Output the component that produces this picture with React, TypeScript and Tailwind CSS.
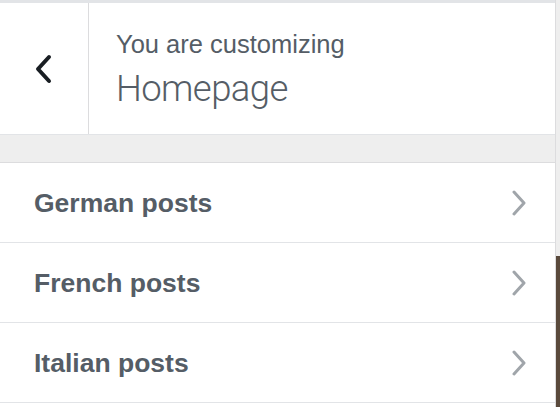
const items = ["German posts", "French posts", "Italian posts"];

const ChevronRight = () => (
  <svg width="16" height="26" viewBox="0 0 16 26" fill="none">
    <polyline
      points="3,2 13,13 3,24"
      stroke="#a0a5aa"
      strokeWidth="3"
      strokeLinecap="round"
      strokeLinejoin="round"
    />
  </svg>
);

const App = () => {
  return (
    <div className="flex w-[560px] h-[407px] overflow-hidden bg-white font-['Liberation_Sans',Arial,sans-serif]">
      <div className="w-[556px] shrink-0 flex flex-col border-r border-[#dcdcde] bg-white">
        <div className="flex h-[135px] border-t-[3px] border-b border-[#e2e4e7]">
          <button className="w-[89px] shrink-0 flex items-center justify-center border-r border-[#dcdcde]">
            <svg width="20" height="30" viewBox="0 0 20 30" fill="none">
              <polyline
                points="15,3 4,15 15,27"
                stroke="#191e23"
                strokeWidth="4"
                strokeLinecap="round"
                strokeLinejoin="round"
              />
            </svg>
          </button>
          <div className="flex flex-col pl-[27px] pt-[27px]">
            <div className="text-[25.5px] leading-[28px] text-[#555d66]">
              You are customizing
            </div>
            <div className="mt-[10px] text-[36.5px] leading-[42px] font-light text-[#555d66] font-['Roboto',sans-serif] tracking-[-0.6px]">
              Homepage
            </div>
          </div>
        </div>
        <div className="h-[28px] bg-[#eeeeee] border-b border-[#dcdcde]" />
        {items.map((label) => (
          <div
            key={label}
            className="h-[80px] shrink-0 flex items-center justify-between pl-[34px] pr-[28px] border-b border-[#e2e4e7]"
          >
            <span className="text-[26.5px] font-bold text-[#555d66] pt-[2px]">{label}</span>
            <ChevronRight />
          </div>
        ))}
      </div>
      <div className="flex-1 flex flex-col">
        <div className="h-[256px] bg-[#eeeeee]" />
        <div className="flex-1 bg-[#5a4a3c]" />
      </div>
    </div>
  );
};

export default App;
